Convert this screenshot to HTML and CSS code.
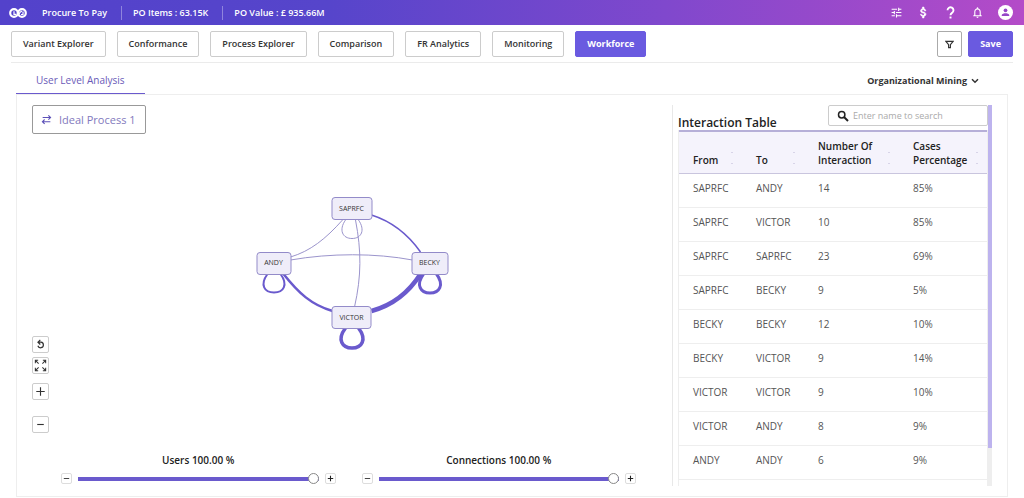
FILE: index.html
```html
<!DOCTYPE html>
<html lang="en">
<head>
<meta charset="utf-8">
<title>Workforce - Procure To Pay</title>
<link rel="stylesheet" href="styles.css">
</head>
<body>
<header class="topbar">
  <svg class="logo" viewBox="0 0 18 10" aria-hidden="true"><g fill="none" stroke="#fff"><circle cx="5" cy="5" r="3.8" stroke-width="2.200"/><circle cx="13" cy="5" r="3.8" stroke-width="2.200"/><path d="M5 3.2v3.2h2.2M9 7.500c1-1 1.500-4 4-4.300M12 6.500h2V3.500" stroke-width="1.200"/></g></svg>
  <span class="crumb">Procure To Pay</span>
  <span class="crumb">PO Items : 63.15K</span>
  <span class="crumb">PO Value : £ 935.66M</span>
  <nav class="top-icons" aria-label="Account">
    <button class="icon-btn" aria-label="Settings"><svg viewBox="0 0 24 24"><path fill="#fff" d="M3 17v2h6v-2H3zM3 5v2h10V5H3zm10 16v-2h8v-2h-8v-2h-2v6h2zM7 9v2H3v2h4v2h2V9H7zm14 4v-2H11v2h10zm-6-4h2V7h4V5h-4V3h-2v6z"/></svg></button>
    <button class="icon-btn" aria-label="Cost"><svg viewBox="0 0 24 24"><path fill="#fff" stroke="#fff" stroke-width="1" d="M11.800 10.900c-2.270-.59-3-1.200-3-2.150 0-1.090 1.010-1.850 2.700-1.850 1.780 0 2.440.85 2.500 2.100h2.210c-.07-1.720-1.120-3.300-3.210-3.810V2h-3v3.160c-1.940.42-3.500 1.680-3.500 3.610 0 2.310 1.910 3.460 4.700 4.130 2.500.6 3 1.480 3 2.410 0 .69-.49 1.790-2.700 1.790-2.060 0-2.870-.92-2.980-2.100h-2.200c.12 2.190 1.760 3.420 3.680 3.830V22h3v-3.150c1.950-.37 3.500-1.500 3.500-3.550 0-2.840-2.430-3.810-4.700-4.400z"/></svg></button>
    <button class="icon-btn" aria-label="Help"><svg viewBox="0 0 24 24"><path fill="none" stroke="#fff" stroke-width="3.500" d="M6.500 8a5.500 5.500 0 1 1 8.500 4.500c-2 1.400-3 2-3 4.500"/><path fill="#fff" d="M10.200 19.500h3.600V23h-3.600z"/></svg></button>
    <button class="icon-btn" aria-label="Notifications"><svg viewBox="0 0 24 24"><path fill="#fff" d="M12 22c1.100 0 2-.9 2-2h-4c0 1.100.9 2 2 2zm6-6v-5c0-3.070-1.630-5.640-4.500-6.320V4c0-.83-.67-1.500-1.500-1.500s-1.500.67-1.500 1.500v.68C7.640 5.360 6 7.920 6 11v5l-2 2v1h16v-1l-2-2zm-2 1H8v-6c0-2.480 1.510-4.500 4-4.500s4 2.020 4 4.500v6z"/></svg></button>
    <button class="icon-btn avatar" aria-label="Profile"><svg viewBox="0 0 24 24"><circle cx="12" cy="12" r="12" fill="#fff"/><circle cx="12" cy="8.500" r="3" fill="#9646c8"/><path fill="#9646c8" d="M6 17.500v-1.500c0-2 4-3 6-3s6 1 6 3v1.500z"/></svg></button>
  </nav>
</header>
<nav class="modules" aria-label="Modules">
  <button class="module">Variant Explorer</button>
  <button class="module">Conformance</button>
  <button class="module">Process Explorer</button>
  <button class="module">Comparison</button>
  <button class="module">FR Analytics</button>
  <button class="module">Monitoring</button>
  <button class="module active">Workforce</button>
  <button class="filter" aria-label="Filter"><svg viewBox="0 0 10 10"><path d="M1 1.500h8L6 5.200V8.500H4V5.200z" fill="none" stroke="#333" stroke-width="1.300"/></svg></button>
  <button class="save">Save</button>
</nav>
<main class="page">
  <div class="tabs">
    <button class="tab">User Level Analysis</button>
    <button class="picker">Organizational Mining <svg viewBox="0 0 8 6"><path d="M1 1.300l3 3 3-3" fill="none" stroke="#333" stroke-width="1.500"/></svg></button>
  </div>
  <div class="panel">
    <section class="network">
      <button class="process"><svg viewBox="0 0 10 10"><path d="M1.500 3.200h7M6.700 1.200l2 2-2 2M8.500 7H1.500M3.300 5l-2 2 2 2" fill="none" stroke="#5c50b8" stroke-width="1"/></svg>Ideal Process 1</button>
      <div class="stage">
        <div class="tools">
          <button class="tool" aria-label="Reset"><svg viewBox="0 0 16 16"><path d="M5.500 5.500h3a3 3 0 1 1-3.300 3.800M7.800 3L5.300 5.500l2.500 2.500" fill="none" stroke="#333" stroke-width="1.300"/></svg></button>
          <button class="tool fit" aria-label="Fit to screen"><svg viewBox="0 0 16 16"><path d="M2.500 5.500v-3h3M2.500 2.500l3.500 3.500M10.500 2.500h3v3M13.500 2.500L10 6M2.500 10.500v3h3M2.500 13.500L6 10M10.500 13.500h3v-3M13.500 13.500L10 10" fill="none" stroke="#333" stroke-width="1.100"/></svg></button>
          <button class="tool plus" aria-label="Zoom in"><svg viewBox="0 0 16 16"><path d="M3.500 8h9M8 3.500v9" stroke="#333" stroke-width="1.200"/></svg></button>
          <button class="tool minus" aria-label="Zoom out"><svg viewBox="0 0 16 16"><path d="M4.500 8h7" stroke="#333" stroke-width="1.200"/></svg></button>
        </div>
        <svg class="graph" viewBox="246 180 210 180" role="img" aria-label="Interaction network">
          <g fill="none" stroke="#6a5acd">
            <path d="M342 219C325 238 310 250 290 256" stroke="#9b94cc"/>
            <path d="M290 259C330 252 375 252 412 259" stroke="#9b94cc"/>
            <path d="M355 219C361 250 361 275 354 306" stroke="#9b94cc"/>
            <path d="M345 219C338 229 342 237.500 351.500 237.500S365 229 358 219" stroke="#9b94cc"/>
            <path d="M371 214C393 221 408 234 420 251" stroke-width="1.500"/>
            <path d="M283 273C298 292 311 304 332 310" stroke-width="2.500"/>
            <path d="M420 273C408 292 393 304 371 310" stroke-width="4.500"/>
            <path d="M267 273C259 284 264 291.500 273.500 291.500S288 284 280 273" stroke-width="2"/>
            <path d="M423 273C415 284 420 292 429.500 292S444 284 436 273" stroke-width="3"/>
            <path d="M345 327C336 339 342 347 351.500 347S367 339 358 327" stroke-width="3.500"/>
          </g>
          <g fill="#efedf9" stroke="#938bc9">
            <rect x="331.500" y="196.500" width="40" height="22" rx="3"/>
            <rect x="256.500" y="251.500" width="34" height="22" rx="3"/>
            <rect x="411.500" y="251.500" width="36" height="22" rx="3"/>
            <rect x="331.500" y="305.500" width="39" height="22" rx="3"/>
          </g>
          <g class="node-text">
            <text x="351" y="210">SAPRFC</text>
            <text x="273" y="264">ANDY</text>
            <text x="429" y="264">BECKY</text>
            <text x="351" y="319">VICTOR</text>
          </g>
        </svg>
      </div>
      <div class="sliders">
        <div class="slider">
          <label for="users">Users 100.00 %</label>
          <div class="slider-row"><button class="step" aria-label="Fewer users"><svg viewBox="0 0 10 10"><path d="M2 5h6" stroke="#333"/></svg></button><input id="users" type="range" min="0" max="100" value="100"><button class="step" aria-label="More users"><svg viewBox="0 0 10 10"><path d="M2 5h6M5 2v6" stroke="#222" stroke-width="1.200"/></svg></button></div>
        </div>
        <div class="slider">
          <label for="connections">Connections 100.00 %</label>
          <div class="slider-row"><button class="step" aria-label="Fewer connections"><svg viewBox="0 0 10 10"><path d="M2 5h6" stroke="#333"/></svg></button><input id="connections" type="range" min="0" max="100" value="100"><button class="step" aria-label="More connections"><svg viewBox="0 0 10 10"><path d="M2 5h6M5 2v6" stroke="#222" stroke-width="1.200"/></svg></button></div>
        </div>
      </div>
    </section>
    <section class="interactions">
      <div class="scroll">
        <div class="table-head">
          <h2>Interaction Table</h2>
          <label class="search"><svg viewBox="0 0 12 12" aria-hidden="true"><circle cx="4.700" cy="4.700" r="3.200" fill="none" stroke="#222" stroke-width="1.500"/><path d="M7 7l4 4" stroke="#222" stroke-width="2"/></svg><input type="text" placeholder="Enter name to search" aria-label="Enter name to search"></label>
        </div>
        <div class="table-wrap">
        <table>
          <colgroup><col class="c-from"><col class="c-to"><col class="c-num"><col class="c-pct"></colgroup>
          <thead><tr>
            <th><div class="th"><span>From</span><i class="sort"></i></div></th>
            <th><div class="th"><span>To</span><i class="sort"></i></div></th>
            <th><div class="th"><span>Number Of<br>Interaction</span><i class="sort"></i></div></th>
            <th><div class="th"><span>Cases<br>Percentage</span><i class="sort"></i></div></th>
          </tr></thead>
          <tbody>
            <tr><td>SAPRFC</td><td>ANDY</td><td>14</td><td>85%</td></tr>
            <tr><td>SAPRFC</td><td>VICTOR</td><td>10</td><td>85%</td></tr>
            <tr><td>SAPRFC</td><td>SAPRFC</td><td>23</td><td>69%</td></tr>
            <tr><td>SAPRFC</td><td>BECKY</td><td>9</td><td>5%</td></tr>
            <tr><td>BECKY</td><td>BECKY</td><td>12</td><td>10%</td></tr>
            <tr><td>BECKY</td><td>VICTOR</td><td>9</td><td>14%</td></tr>
            <tr><td>VICTOR</td><td>VICTOR</td><td>9</td><td>10%</td></tr>
            <tr><td>VICTOR</td><td>ANDY</td><td>8</td><td>9%</td></tr>
            <tr><td>ANDY</td><td>ANDY</td><td>6</td><td>9%</td></tr>
          </tbody>
        </table>
        </div>
      </div>
      <div class="rail"><div class="rail-thumb"></div></div>
    </section>
  </div>
</main>
</body>
</html>
```
FILE: styles.css
```css
* { box-sizing: border-box; }
body {
  margin: 0;
  height: 100vh;
  display: flex;
  flex-direction: column;
  font: 10px/14px "Open Sans", "Noto Sans", sans-serif;
  color: #333;
  background: #fff;
}
button {
  font: inherit;
  color: inherit;
  background: #fff;
  border: 1px solid #ccc;
  border-radius: 2px;
  padding: 0;
  display: flex;
  align-items: center;
  justify-content: center;
  white-space: nowrap;
}
svg { display: block; }

.topbar {
  height: 25px;
  flex: none;
  display: flex;
  align-items: center;
  padding: 0 11px 0 9px;
  color: #fff;
  background: linear-gradient(90deg, #5342cb 0%, #5645cb 32%, #8048cd 65%, #b44bc8 100%);
}
.logo { width: 18px; height: 10px; margin-right: 15px; }
.crumb { font-size: 9px; font-weight: 600; }
.crumb + .crumb {
  border-left: 1px solid #8f84dd;
  margin-left: 14px;
  padding-left: 11px;
}
.top-icons { margin-left: auto; display: flex; align-items: center; gap: 14px; }
.icon-btn { background: none; border: 0; width: 13px; height: 13px; }
.icon-btn svg { width: 13px; height: 13px; }
.avatar, .avatar svg { width: 15px; height: 15px; }

.modules {
  flex: none;
  display: flex;
  gap: 11px;
  margin: 0 11px;
  padding: 6px 0 5px;
  border-bottom: 1px solid #ebebeb;
}
.module, .save { height: 26px; padding: 0 11px; font-size: 9px; font-weight: 600; }
.active, .save { background: #6a5ae0; border-color: #6a5ae0; color: #fff; font-weight: 700; }
.filter { margin-left: auto; width: 25px; border-color: #aaa; }
.filter svg { width: 9px; height: 9px; }
.save { margin-left: -5px; }

.page {
  flex: 1;
  min-height: 0;
  display: flex;
  flex-direction: column;
  padding: 0 16px 1px;
}
.tabs { flex: none; height: 32px; margin-bottom: -1px; display: flex; justify-content: space-between; }
.tab {
  border: 0;
  border-bottom: 2px solid #6a5acd;
  border-radius: 0;
  padding: 4px 20px 0;
  color: #6a5ab8;
  font-weight: 500;
}
.picker { border: 0; padding: 3px 29px 0 0; gap: 4px; font-size: 9px; font-weight: 700; }
.picker svg { width: 8px; height: 6px; }
.panel {
  flex: 1;
  min-height: 0;
  display: grid;
  grid-template-columns: 655fr 335fr;
  border: 1px solid #eee;
}

.network {
  display: flex;
  flex-direction: column;
  align-items: stretch;
  padding: 10px 18px 12px 15px;
  min-height: 0;
}
.process {
  align-self: flex-start;
  height: 29px;
  padding: 0 9px 0 8px;
  gap: 7px;
  border-color: #999;
  color: #8279bd;
  font-size: 11px;
}
.process svg { width: 11px; height: 11px; }
.stage { flex: 1; min-height: 0; display: flex; align-items: center; }
.tools { align-self: flex-end; display: flex; flex-direction: column; gap: 4px; }
.tool { width: 17px; height: 17px; }
.tool svg { width: 15px; height: 15px; }
.fit { margin-bottom: 5px; }
.plus { margin-bottom: 12px; }
.graph { flex: 1; min-width: 0; height: 180px; margin-bottom: 26px; }
.node-text { font-size: 7px; text-anchor: middle; fill: #333; }

.sliders { display: flex; gap: 26px; padding: 20px 18px 0 29px; }
.slider { flex: 1; display: flex; flex-direction: column; align-items: center; gap: 6px; }
.slider label { font-weight: 600; color: #222; }
.slider-row { align-self: stretch; display: flex; align-items: center; gap: 6px; }
.step { width: 11px; height: 11px; border-color: #ddd; }
.step svg { width: 9px; height: 9px; }
.slider input {
  appearance: none;
  flex: 1;
  min-width: 0;
  height: 11px;
  margin: 0;
  background: linear-gradient(#6a5acd, #6a5acd) center / 100% 4px no-repeat;
}
.slider input::-webkit-slider-thumb {
  appearance: none;
  width: 11px;
  height: 11px;
  border: 1px solid #888;
  border-radius: 50%;
  background: #fff;
}

.interactions {
  display: flex;
  min-width: 0;
  min-height: 0;
  margin: 10px 15px 10px 0;
  padding-left: 5px;
  border-left: 1px solid #e8e8e8;
}
.scroll { flex: 1; min-width: 0; overflow: hidden; display: flex; flex-direction: column; }
.table-head { flex: none; display: flex; align-items: flex-start; justify-content: space-between; height: 25px; }
.table-head h2 { margin: 9px 0 0; font-size: 12px; line-height: 17px; font-weight: 600; color: #222; }
.search {
  display: flex;
  align-items: center;
  width: 160px;
  height: 21px;
  padding-left: 8px;
  gap: 4px;
  border: 1px solid #ccc;
  border-radius: 2px;
}
.search svg { width: 12px; height: 12px; flex: none; }
.search input { flex: 1; min-width: 0; border: 0; padding: 0; background: none; font: inherit; font-size: 9px; }
.search input::placeholder { color: #aaa; }
.table-wrap {
  flex: 1;
  border: 1px solid #eee;
  border-width: 0 1px;
}
table {
  width: 100%;
  table-layout: fixed;
  border-collapse: separate;
  border-spacing: 0;
  border-top: 2px solid #b6afd8;
}
.c-from { width: 63px; }
.c-to { width: 62px; }
.c-num { width: 95px; }
th, td { padding: 0 0 0 14px; text-align: left; }
th {
  height: 42px;
  vertical-align: bottom;
  background: #f5f3fc;
  border-bottom: 1px solid #c9c5de;
  color: #222;
  font-weight: 600;
}
.th { display: flex; align-items: flex-end; justify-content: space-between; padding: 0 9px 6px 0; }
.sort { width: 2px; height: 12px; margin-bottom: 3px; border: solid #d8d4e8; border-width: 1px 0; }
td { height: 34px; padding-bottom: 5px; border-bottom: 1px solid #eee; color: #555; }
.rail { flex: none; width: 4px; background: #eee; }
.rail-thumb { height: 90%; background: #bdb3ee; }
```
